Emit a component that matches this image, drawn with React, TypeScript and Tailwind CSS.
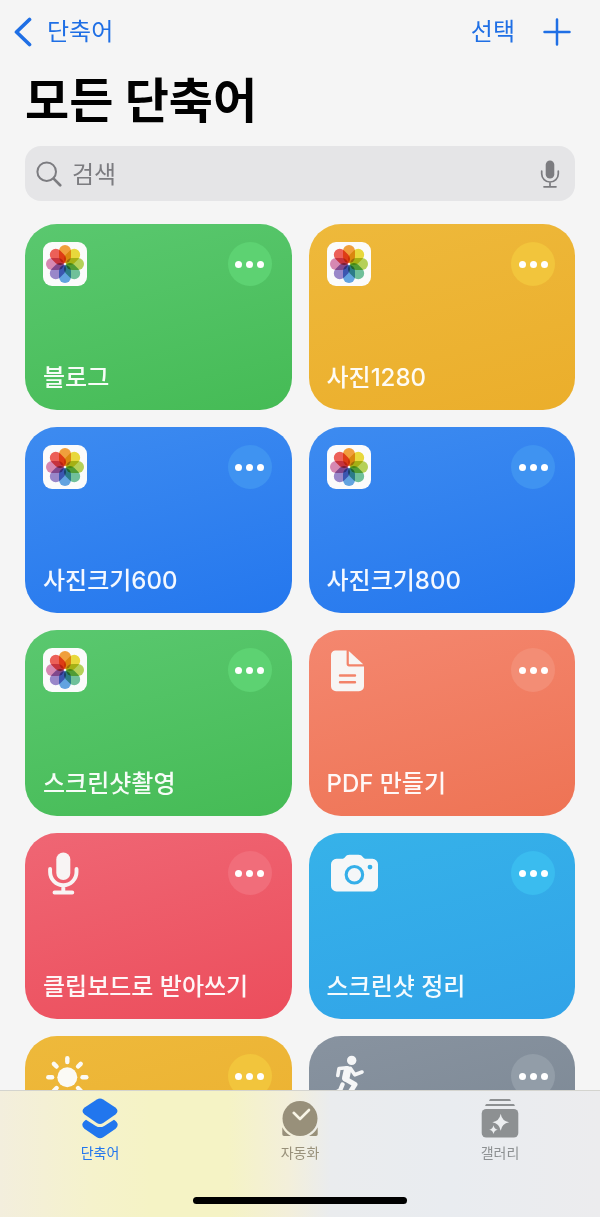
import React, { useState } from 'react'

type IconName = 'photos' | 'document' | 'mic' | 'camera' | 'sun' | 'runner'

interface Shortcut {
  title: string
  icon: IconName
  card: string
  more: string
}

const GREEN = { card: 'from-[#5ac86f] to-[#45bb55]', more: 'bg-[#5dd272]' }
const YELLOW = { card: 'from-[#eeb93b] to-[#ebae2b]', more: 'bg-[#f2c53c]' }
const BLUE = { card: 'from-[#3d8bf0] to-[#2477ee]', more: 'bg-[#3f93f1]' }
const CORAL = { card: 'from-[#f4876f] to-[#ee7354]', more: 'bg-[#f38d75]' }
const RED = { card: 'from-[#ef6674] to-[#ec4d5c]', more: 'bg-[#f16d7a]' }
const SKY = { card: 'from-[#36b2e9] to-[#31a3e8]', more: 'bg-[#3abcef]' }
const GRAY = { card: 'from-[#8893a0] to-[#788490]', more: 'bg-[#929da8]' }

const shortcuts: Shortcut[] = [
  { title: '블로그', icon: 'photos', ...GREEN },
  { title: '사진1280', icon: 'photos', ...YELLOW },
  { title: '사진크기600', icon: 'photos', ...BLUE },
  { title: '사진크기800', icon: 'photos', ...BLUE },
  { title: '스크린샷촬영', icon: 'photos', ...GREEN },
  { title: 'PDF 만들기', icon: 'document', ...CORAL },
  { title: '클립보드로 받아쓰기', icon: 'mic', ...RED },
  { title: '스크린샷 정리', icon: 'camera', ...SKY },
  { title: '', icon: 'sun', ...YELLOW },
  { title: '', icon: 'runner', ...GRAY },
]

const PETALS = ['#f09f3c', '#e8d83c', '#b5d058', '#70c09a', '#62a3e0', '#9987c9', '#d688b2', '#ec6058']

function PhotosIcon() {
  return (
    <svg className="size-11" viewBox="-22 -22 44 44" aria-hidden="true">
      <rect x="-22" y="-22" width="44" height="44" rx="9" fill="#fbfbfb" />
      <g className="isolate">
        {PETALS.map((color, i) => (
          <rect
            key={color}
            className="mix-blend-multiply"
            x="-6"
            y="-19"
            width="12"
            height="18"
            rx="6"
            fill={color}
            transform={`rotate(${i * 45})`}
          />
        ))}
      </g>
    </svg>
  )
}

function GlyphIcon({ name }: { name: IconName }) {
  switch (name) {
    case 'document':
      return (
        <svg className="h-11 w-[52px]" viewBox="1 0 52 44" fill="#f7f5f4" aria-hidden="true">
          <path
            fillRule="evenodd"
            d="M9 2.5h11.6v13.6c0 1.4 1 2.4 2.4 2.4h15v19.8a5 5 0 0 1-5 5H10a5 5 0 0 1-5-5V7.5a5 5 0 0 1 4-5zM14 26.3a1.2 1.2 0 0 0 0 2.4h15a1.2 1.2 0 0 0 0-2.4zM14 33.1a1.2 1.2 0 0 0 0 2.4h15a1.2 1.2 0 0 0 0-2.4z"
          />
          <path d="M22.8 3.1v12.3c0 .5.3.8.8.8h13.6z" />
        </svg>
      )
    case 'mic':
      return (
        <svg className="h-11 w-[52px]" viewBox="0 0 52 44" aria-hidden="true">
          <rect x="13.3" y="1.5" width="14" height="27.5" rx="7" fill="#f8f4f4" />
          <path
            d="M7.1 18v3a13.2 13.2 0 0 0 26.4 0v-3M20.3 35v5M11.5 41.5h17.8"
            fill="none"
            stroke="#f8f4f4"
            strokeWidth="3.9"
            strokeLinecap="round"
          />
        </svg>
      )
    case 'camera':
      return (
        <svg className="h-11 w-[52px]" viewBox="1 0 52 44" fill="#f5f7f8" aria-hidden="true">
          <path
            fillRule="evenodd"
            d="M10.5 7.8h5.5c1.5 0 2.3-.9 3.2-1.9 1.1-1.3 2.2-2.2 4.3-2.2h9c2.1 0 3.2.9 4.3 2.2.9 1 1.7 1.900 3.200 1.900h6.500a5.500 5.500 0 0 1 5.500 5.500v21.600a5.500 5.500 0 0 1-5.500 5.500h-36a5.500 5.500 0 0 1-5.500-5.500V13.300a5.500 5.500 0 0 1 5.500-5.500zM28.400 14a9.800 9.800 0 1 0 0 19.600 9.800 9.800 0 1 0 0-19.600zM44 13.700a2.400 2.400 0 1 0 0 4.800 2.400 2.400 0 1 0 0-4.800z"
          />
          <circle cx="28.4" cy="23.8" r="6.7" />
        </svg>
      )
    case 'sun':
      return (
        <svg className="h-11 w-[52px]" viewBox="0 0 52 44" fill="#fbfaf5" aria-hidden="true">
          <circle cx="24.3" cy="23.3" r="10" />
          {[0, 45, 90, 135, 180, 225, 270, 315].map((angle) => (
            <rect key={angle} x="22.1" y="2.1" width="4.4" height="8.2" rx="2.2" transform={`rotate(${angle} 24.3 23.3)`} />
          ))}
        </svg>
      )
    case 'runner':
      return (
        <svg className="h-11 w-[52px]" viewBox="0 0 52 44" aria-hidden="true">
          <circle cx="24.7" cy="6.4" r="4.7" fill="#f5f6f7" />
          <g fill="none" stroke="#f5f6f7" strokeLinecap="round" strokeLinejoin="round">
            <path d="M10.8 21.5l1.2-7 8-.7" strokeWidth="3.6" />
            <path d="M23.5 14.5l4.3 6.3 7.2-2.8" strokeWidth="3.6" />
            <path d="M20.6 15.8l-1.8 8" strokeWidth="7.5" />
            <path d="M18.5 25l9.5 5.5-4.5 7" strokeWidth="5" />
            <path d="M15.5 30.5l-2.5 6-6 3" strokeWidth="4.4" />
          </g>
        </svg>
      )
    default:
      return <PhotosIcon />
  }
}

function ShortcutCard({ title, icon, card, more }: Shortcut) {
  return (
    <li
      className={`flex h-[186px] flex-col justify-between rounded-[32px] bg-linear-165 pt-[18px] pr-5 pb-4 pl-[18px] ${card}`}
    >
      <div className="flex items-start justify-between">
        <GlyphIcon name={icon} />
        <button
          type="button"
          aria-label={`${title} 편집`}
          className={`flex size-11 items-center justify-center gap-1 rounded-full ${more}`}
        >
          <span className="size-[7px] rounded-full bg-white" />
          <span className="size-[7px] rounded-full bg-white" />
          <span className="size-[7px] rounded-full bg-white" />
        </button>
      </div>
      {title && <h2 className="text-2xl leading-8 font-medium whitespace-nowrap text-white/95">{title}</h2>}
    </li>
  )
}

function Header() {
  return (
    <header className="flex h-[62px] items-center justify-between pt-0.5 pr-[29px] pl-[14px] text-2xl text-[#1f6fe5]">
      <a href="#shortcuts" className="flex items-center gap-[15px]">
        <svg className="h-[30px] w-[18px]" viewBox="0 0 18 30" fill="none" aria-hidden="true">
          <path d="M15.5 2.5L2.5 15l13 12.5" stroke="currentColor" strokeWidth="3.7" strokeLinecap="round" strokeLinejoin="round" />
        </svg>
        단축어
      </a>
      <div className="flex items-center gap-7">
        <button type="button">선택</button>
        <button type="button" aria-label="추가">
          <svg className="size-7" viewBox="0 0 28 28" fill="none" aria-hidden="true">
            <path d="M14 1.5v25M1.5 14h25" stroke="currentColor" strokeWidth="2.5" strokeLinecap="round" />
          </svg>
        </button>
      </div>
    </header>
  )
}

function SearchBar({ value, onChange }: { value: string; onChange: (value: string) => void }) {
  return (
    <div className="mx-[25px] flex h-[55px] items-center rounded-2xl bg-[#e5e5e7] pr-[15px] pl-[11px] text-[#7c7c80]">
      <svg className="size-[26px] shrink-0" viewBox="0 0 26 26" fill="none" stroke="currentColor" aria-hidden="true">
        <circle cx="10.7" cy="10.7" r="9.3" strokeWidth="2" />
        <path d="M17.6 17.6l6.6 6.6" strokeWidth="2.7" strokeLinecap="round" />
      </svg>
      <input
        type="text"
        aria-label="검색"
        placeholder="검색"
        value={value}
        onChange={(e) => onChange(e.target.value)}
        className="min-w-0 flex-1 bg-transparent px-[10px] pt-0.5 text-2xl leading-8 outline-none placeholder:text-[#7c7c80]"
      />
      <button type="button" aria-label="받아쓰기">
        <svg className="h-7 w-5" viewBox="0 0 20 28" fill="none" aria-hidden="true">
          <rect x="5.7" y="0.5" width="8.6" height="18" rx="4.3" fill="currentColor" />
          <path
            d="M1.7 11v2.7a8.3 8.3 0 0 0 16.6 0V11M10 22v4.5M4 26.8h12"
            stroke="currentColor"
            strokeWidth="1.7"
            strokeLinecap="round"
          />
        </svg>
      </button>
    </div>
  )
}

function ShortcutsTabIcon() {
  return (
    <svg className="h-[42px] w-[38px]" viewBox="0 0 38 42" fill="currentColor" aria-hidden="true">
      <path d="M15.8 1.4Q19-.4 22.2 1.4L34.4 9.500Q38.600 13 34.400 16.500L22.200 25.100Q19 26.900 15.800 25.100L3.600 16.500Q-.6 13 3.600 9.500z" />
      <path d="M5 21.7l9.8 6.200Q19 30.300 23.200 27.900L33 21.700Q39.500 26 34.600 30.700L22.200 39.300Q19 41.200 15.800 39.300L3.400 30.700Q-1.500 26 5 21.700z" />
    </svg>
  )
}

function AutomationTabIcon() {
  return (
    <svg className="h-[42px] w-[38px]" viewBox="0 0 38 42" aria-hidden="true">
      <circle cx="19" cy="20.5" r="17.5" fill="currentColor" />
      <path
        d="M12.7 14.8l6.3 6.2 9-9"
        fill="none"
        stroke="#f8f5e6"
        strokeWidth="2.6"
        strokeLinecap="round"
        strokeLinejoin="round"
      />
      <path
        d="M1.3 29.2A19.7 19.7 0 0 0 9.9 38H3q-1.7 0-1.7-1.7zM36.7 29.2A19.7 19.7 0 0 1 28.1 38H35q1.7 0 1.7-1.7z"
        fill="currentColor"
      />
    </svg>
  )
}

function GalleryTabIcon() {
  return (
    <svg className="h-[42px] w-[38px]" viewBox="0 0 38 42" fill="currentColor" aria-hidden="true">
      <path d="M9.5 1h19q1 0 1.4 2H8.1q.4-2 1.4-2zM5.5 6h27q1 0 1.4 2H4.1q.4-2 1.4-2z" />
      <rect x=".7" y="11" width="36.6" height="28.5" rx="4.5" />
      <path
        fill="#eceef0"
        d="M19.7 15.8q1.2 7.3 8.4 8.4-7.2 1.2-8.4 8.5-1.2-7.3-8.4-8.5 7.2-1.1 8.4-8.4zM12.5 27.2q.7 3.9 4.3 4.5-3.6.6-4.3 4.3-.7-3.7-4.3-4.3 3.6-.6 4.3-4.5z"
      />
    </svg>
  )
}

const tabs = [
  { label: '단축어', href: '#shortcuts', color: 'text-[#2176ee]', Icon: ShortcutsTabIcon },
  { label: '자동화', href: '#automation', color: 'text-[#98907a]', Icon: AutomationTabIcon },
  { label: '갤러리', href: '#gallery', color: 'text-[#8d9092]', Icon: GalleryTabIcon },
]

function TabBar() {
  return (
    <nav className="shrink-0 border-t border-[#d4d4cf] bg-[linear-gradient(90deg,#f3eedd_0%,#f5f2cc_15%,#f5f3c5_25%,#f5f3c5_38%,#f3efda_48%,#eaecee_55%,#e9ecf0_75%,#ececee_100%)]">
      <ul className="grid grid-cols-3 pt-[7px]">
        {tabs.map(({ label, href, color, Icon }) => (
          <li key={label}>
            <a href={href} className={`flex flex-col items-center gap-[3px] text-sm leading-5 ${color}`}>
              <Icon />
              {label}
            </a>
          </li>
        ))}
      </ul>
      <div className="flex justify-center pt-[34px] pb-[13px]">
        <div className="h-[7px] w-[214px] rounded-full bg-black" />
      </div>
    </nav>
  )
}

export default function App() {
  const [query, setQuery] = useState('')
  const visible = shortcuts.filter((shortcut) => shortcut.title.includes(query))

  return (
    <div className="flex h-screen flex-col bg-[#f5f5f5] font-[Inter,'Noto_Sans_CJK_KR',sans-serif]">
      <main className="min-h-0 flex-1 overflow-hidden">
        <Header />
        <h1 className="mb-[13px] px-[25px] pt-[7px] text-5xl leading-[64px] font-bold text-black">모든 단축어</h1>
        <SearchBar value={query} onChange={setQuery} />
        <ul className="grid grid-cols-2 gap-[17px] px-[25px] pt-[23px]">
          {visible.map((shortcut, i) => (
            <ShortcutCard key={i} {...shortcut} />
          ))}
        </ul>
      </main>
      <TabBar />
    </div>
  )
}
